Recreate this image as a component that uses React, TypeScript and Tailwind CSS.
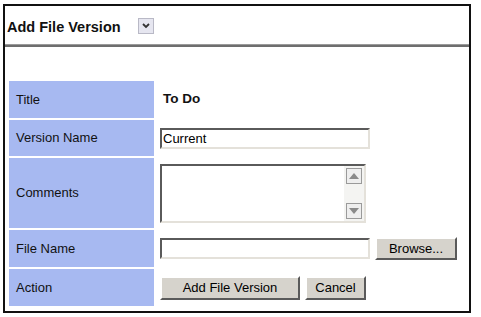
import React from 'react';

const inset =
  'border-2 border-t-[#5a5a5a] border-l-[#5a5a5a] border-b-[#e4e1da] border-r-[#e4e1da] bg-white';
const outset =
  'border-2 border-t-white border-l-white border-b-[#5a5a5a] border-r-[#5a5a5a] bg-[#d6d3cc] text-[13px] text-black flex items-center justify-center';

function Label({ text, h }: { text: string; h: string }) {
  return (
    <div className={`bg-[#a7b9f1] flex items-center pl-[7px] text-[13px] text-[#111] ${h}`}>
      {text}
    </div>
  );
}

function ScrollButton({ up }: { up: boolean }) {
  return (
    <div className="w-[16px] h-[16px] border border-[#9a9a9a] bg-[#eeeeee] flex items-center justify-center">
      <svg width="10" height="6" viewBox="0 0 10 6">
        {up ? <polygon points="5,0 10,6 0,6" fill="#8a8a8a" /> : <polygon points="0,0 10,0 5,6" fill="#8a8a8a" />}
      </svg>
    </div>
  );
}

export default function App() {
  return (
    <div className="w-[481px] h-[317px] bg-white font-['Liberation_Sans',Arial,sans-serif] pt-[4px] pl-[3px]">
      <div className="w-[468px] h-[309px] border-2 border-[#111] flex flex-col">
        {/* Header */}
        <div className="h-[38px] flex items-center pl-[2px] pt-[5px]">
          <span className="text-[14.5px] font-bold text-[#111]">Add File Version</span>
          <div className="ml-[17px] mb-[3px] w-[16px] h-[16px] border border-[#b9b9c6] bg-[#e6e6f0] flex items-center justify-center">
            <svg width="8" height="6" viewBox="0 0 8 6">
              <polyline points="1,1 4,4 7,1" fill="none" stroke="#333" strokeWidth="1.8" />
            </svg>
          </div>
        </div>
        <div className="h-[1px] bg-[#9a9a9a]" />
        <div className="h-[2px] bg-[#6e6e6e]" />

        {/* Form */}
        <div className="mt-[34px] ml-[4px] grid grid-cols-[145px_1fr] gap-y-[2px]">
          <Label text="Title" h="h-[37px]" />
          <div className="flex items-center pl-[9px] text-[13.5px] font-bold text-[#111]">To Do</div>

          <Label text="Version Name" h="h-[36px]" />
          <div className="flex items-center pl-[6px]">
            <input
              defaultValue="Current"
              className={`${inset} w-[210px] h-[21px] px-[1px] text-[13px] text-black outline-none`}
            />
          </div>

          <Label text="Comments" h="h-[70px]" />
          <div className="flex items-center pl-[6px]">
            <div className={`${inset} w-[206px] h-[59px] flex`}>
              <div className="flex-1" />
              <div className="w-[20px] bg-[#f4f4f2] flex flex-col justify-between items-center py-[2px]">
                <ScrollButton up />
                <ScrollButton up={false} />
              </div>
            </div>
          </div>

          <Label text="File Name" h="h-[37px]" />
          <div className="flex items-center pl-[6px] gap-[5px]">
            <input className={`${inset} w-[210px] h-[21px] text-[13px] outline-none`} />
            <button className={`${outset} w-[82px] h-[23px]`}>Browse...</button>
          </div>

          <Label text="Action" h="h-[37px]" />
          <div className="flex items-center pl-[6px] gap-[5px]">
            <button className={`${outset} w-[140px] h-[24px]`}>Add File Version</button>
            <button className={`${outset} w-[61px] h-[24px]`}>Cancel</button>
          </div>
        </div>
      </div>
    </div>
  );
}
